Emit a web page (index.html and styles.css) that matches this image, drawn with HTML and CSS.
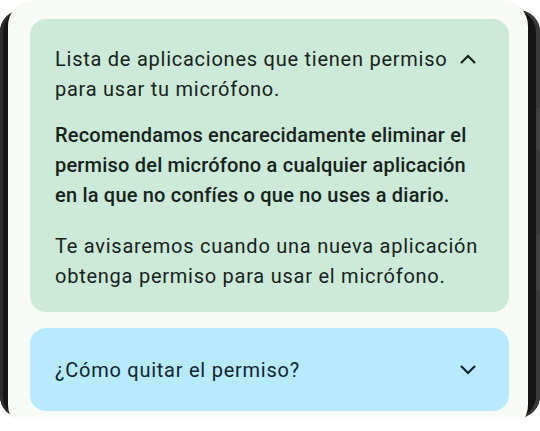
FILE: index.html
```html
<!DOCTYPE html>
<html lang="es">
<head>
    <meta charset="UTF-8">
    <meta name="viewport" content="width=device-width, initial-scale=1.0">
    <link rel="stylesheet" href="styles.css">
</head>
<body>
    <div class="phone">
        <div class="side-button side-button1"></div>
        <div class="side-button side-button2"></div>
        <div class="screen">
            <div class="card card-green">
                <div class="card-header">
                    <div class="card-title">Lista de aplicaciones que tienen permiso para usar tu micrófono.</div>
                    <svg class="chevron" width="18" height="12" viewBox="0 0 18 12">
                        <polyline points="2,10 9,3 16,10" fill="none" stroke="#15231b" stroke-width="2.2"/>
                    </svg>
                </div>
                <p class="strong-text">Recomendamos encarecidamente eliminar el permiso del micrófono a cualquier aplicación en la que no confíes o que no uses a diario.</p>
                <p class="body-text">Te avisaremos cuando una nueva aplicación obtenga permiso para usar el micrófono.</p>
            </div>
            <div class="card card-blue">
                <div class="card-header card-header-center">
                    <div class="card-title">¿Cómo quitar el permiso?</div>
                    <svg class="chevron" width="18" height="12" viewBox="0 0 18 12">
                        <polyline points="2,2 9,9 16,2" fill="none" stroke="#0f2530" stroke-width="2.2"/>
                    </svg>
                </div>
            </div>
        </div>
    </div>
</body>
</html>
```
FILE: styles.css
```css
body {
    margin: 0;
    background-color: #ffffff;
    font-family: Roboto, "Noto Sans", sans-serif;
}

.phone {
    position: relative;
    display: flex;
    flex-direction: column;
    margin-top: 10px;
    height: 408px;
    background-color: #151515;
    border-radius: 22px;
    padding: 0 8px 0 8px;
    box-shadow: inset -4px 0 0 #3a3a3a, inset 3px 0 0 #2c2c2c;
}

.side-button {
    position: absolute;
    right: 0;
    width: 3px;
    background-color: #444444;
    border-radius: 2px 0 0 2px;
}

.side-button1 {
    top: 98px;
    height: 42px;
}

.side-button2 {
    top: 225px;
    height: 56px;
}

.screen {
    margin: -10px 4px -13px 0;
    height: 431px;
    flex-shrink: 0;
    box-sizing: border-box;
    background-color: #f8fbf5;
    border-radius: 26px;
    padding: 19px 19px 0 22px;
    display: flex;
    flex-direction: column;
    gap: 16px;
}

.card {
    border-radius: 16px;
    padding: 0 25px;
    color: #15231b;
}

.card-green {
    background-color: #cde9d8;
    padding-top: 25px;
    padding-bottom: 21px;
}

.card-blue {
    background-color: #b6eafc;
    color: #0f2530;
    height: 83px;
    flex-shrink: 0;
    display: flex;
    align-items: center;
}

.card-header {
    display: flex;
    align-items: flex-start;
    gap: 2px;
    width: 100%;
}

.card-header-center {
    align-items: center;
}

.card-title {
    flex: 1;
    font-size: 20px;
    line-height: 30px;
    letter-spacing: 0.75px;
}

.chevron {
    margin-top: 9px;
    margin-right: 7px;
    flex-shrink: 0;
}

.card-header-center .chevron {
    margin-top: 0;
}

.strong-text {
    margin: 16px 0 0 0;
    font-size: 20px;
    font-weight: 500;
    line-height: 30px;
    letter-spacing: 0.2px;
}

.body-text {
    margin: 21px 0 0 0;
    font-size: 20px;
    line-height: 30px;
    letter-spacing: 0.75px;
}
```
